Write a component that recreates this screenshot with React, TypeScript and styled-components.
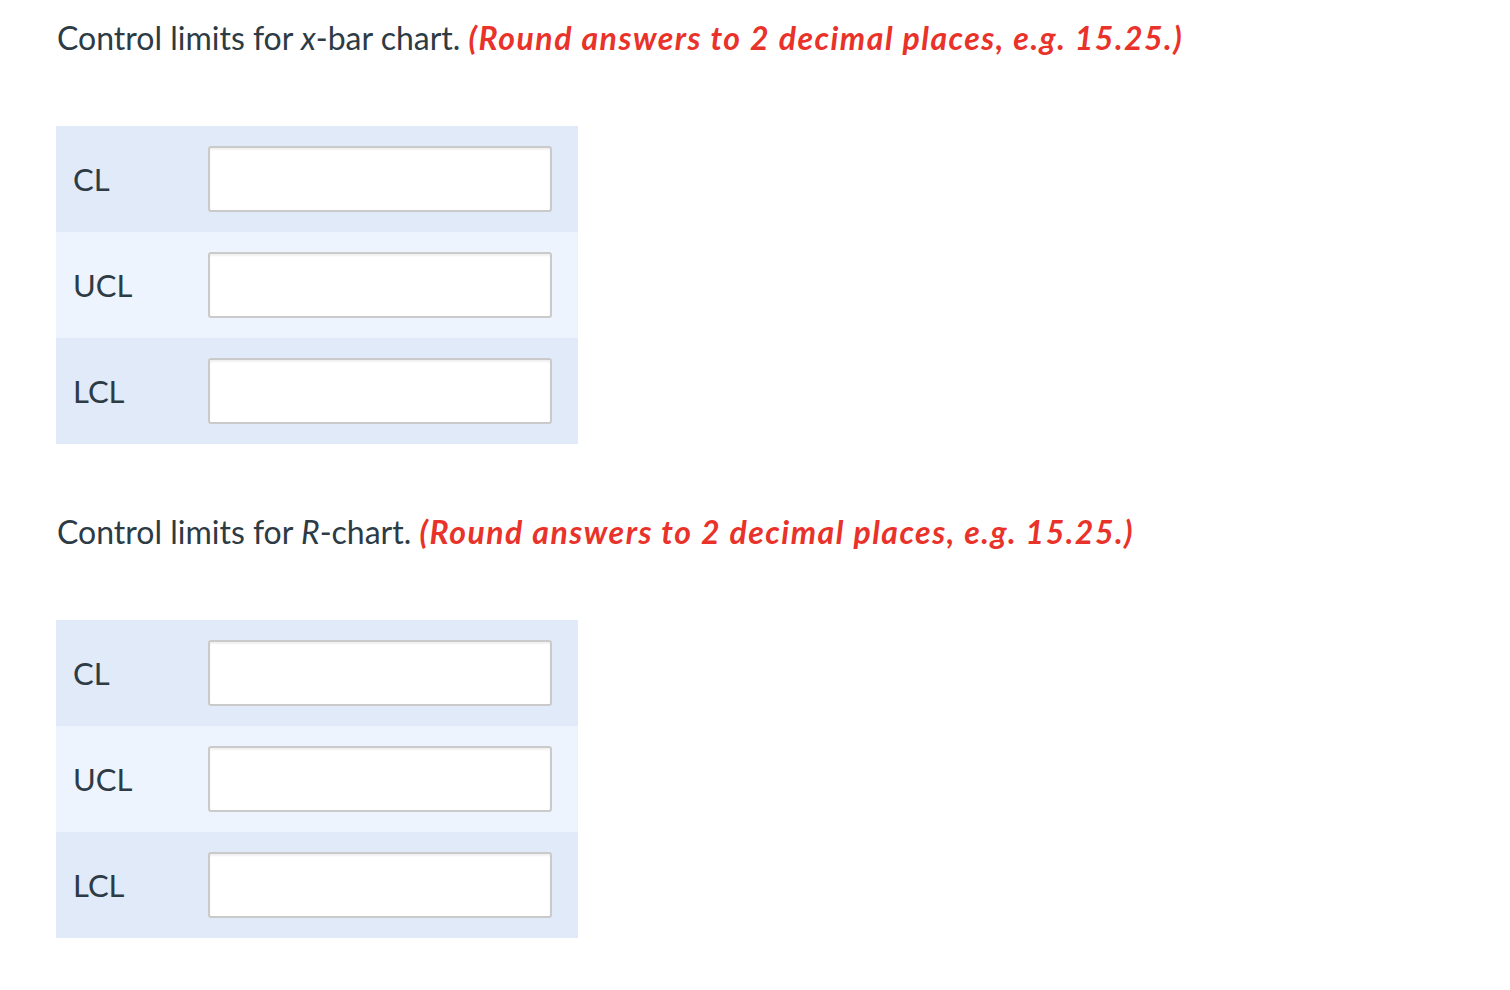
import React from "react";
import styled, { createGlobalStyle } from "styled-components";

const Global = createGlobalStyle`
  html, body { margin: 0; padding: 0; background: #ffffff; }
  body { font-family: Lato, "Open Sans", sans-serif; color: #2d3b45; }
`;

const Page = styled.div`
  padding: 19px 0 0 56px;
  display: flex;
  flex-direction: column;
`;

const Section = styled.section`
  display: flex;
  flex-direction: column;
  margin-bottom: 69px;
`;

const Prompt = styled.p`
  margin: 0 0 69px 1px;
  font-size: 32px;
  line-height: 38px;
  font-weight: 400;
  color: #2d3b45;
`;

const Var = styled.i`
  font-style: italic;
`;

const Hint = styled.span`
  color: #e8322a;
  font-weight: 700;
  font-style: italic;
  letter-spacing: 1.5px;
`;

const Table = styled.div`
  width: 522px;
  display: flex;
  flex-direction: column;
`;

const Row = styled.div<{ $alt?: boolean }>`
  height: 106px;
  display: flex;
  align-items: center;
  background: ${(p) => (p.$alt ? "#edf4fe" : "#e1eaf8")};
  box-sizing: border-box;
`;

const Label = styled.label`
  width: 152px;
  padding-left: 17px;
  box-sizing: border-box;
  font-size: 31px;
  color: #2d3b45;
`;

const Field = styled.input`
  width: 344px;
  height: 66px;
  box-sizing: border-box;
  border: 2px solid #cacaca;
  border-radius: 3px;
  background: #ffffff;
  box-shadow: inset 0 2px 2px rgba(0, 0, 0, 0.06);
  outline: none;
  margin: 0;
`;

const rows = ["CL", "UCL", "LCL"];

function LimitsTable() {
  return (
    <Table>
      {rows.map((r, i) => (
        <Row key={r} $alt={i === 1}>
          <Label>{r}</Label>
          <Field type="text" aria-label={r} />
        </Row>
      ))}
    </Table>
  );
}

export default function App() {
  return (
    <>
      <Global />
      <Page>
        <Section>
          <Prompt>
            Control limits for <Var>x</Var>-bar chart.{" "}
            <Hint>(Round answers to 2 decimal places, e.g. 15.25.)</Hint>
          </Prompt>
          <LimitsTable />
        </Section>
        <Section>
          <Prompt>
            Control limits for <Var>R</Var>-chart.{" "}
            <Hint>(Round answers to 2 decimal places, e.g. 15.25.)</Hint>
          </Prompt>
          <LimitsTable />
        </Section>
      </Page>
    </>
  );
}
